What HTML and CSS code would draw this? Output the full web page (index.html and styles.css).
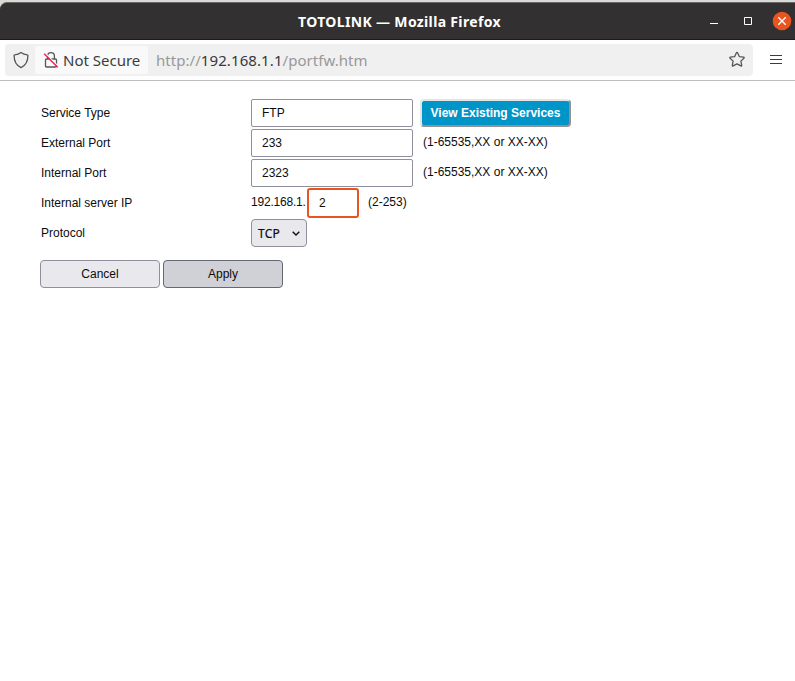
FILE: index.html
```html
<!DOCTYPE html>
<html lang="en">
<head>
<meta charset="utf-8">
<title>TOTOLINK</title>
<link rel="stylesheet" href="styles.css">
</head>
<body>
<div class="window">
  <header class="titlebar">
    <h1 class="title">TOTOLINK — Mozilla Firefox</h1>
    <svg class="controls" width="95" height="37" viewBox="0 0 95 37">
      <path d="M10 20.5h8" stroke="#fff" fill="none"/>
      <path d="M44.5 14.5h7v7h-7z" stroke="#fff" fill="none"/>
      <circle cx="82" cy="18" r="9.3" fill="#e95420"/>
      <path d="M78.300 14.300l7.400 7.400M85.700 14.300l-7.400 7.400" stroke="#fff" stroke-width="1.400"/>
    </svg>
  </header>
  <nav class="toolbar">
    <div class="urlbar">
      <svg class="shield" width="16" height="18" viewBox="0 0 16 18"><path d="M8 1.600C10 3.100 12 3.700 14.300 3.900c.4 0 .6.300.6.700 0 6-1.800 9.900-6.900 12C2.900 14.500 1.100 10.600 1.100 4.600c0-.4.2-.7.6-.7C4 3.700 6 3.100 8 1.600z"/></svg>
      <div class="identity">
        <svg class="lock" width="16" height="18" viewBox="0 0 16 18">
          <path d="M4.600 8V5a3.400 3.400 0 0 1 6.800 0v3M3.600 8h8.800q1.100 0 1.100 1.100v5.800q0 1.100-1.100 1.100H3.600q-1.100 0-1.100-1.100V9.100Q2.500 8 3.600 8z" fill="none" stroke="#55555a" stroke-width="1.300"/>
          <path d="M2.300 2.300l13 13" stroke="#f8f8f8" stroke-width="1.300"/>
          <path d="M1.200 2.800l13.500 13.500" stroke="#f0204e" stroke-width="1.400"/>
        </svg>
        <span class="secure">Not Secure</span>
      </div>
      <div class="url"><span class="scheme">http://</span><span class="host">192.168.1.1</span><span class="path">/portfw.htm</span></div>
      <svg class="star" width="18" height="18" viewBox="0 0 18 18"><path d="M9 1.500q.45 0 .7.5l1.700 3.700 4.200.5q1 .2.300 1l-3 2.900.8 4.200q.1 1-.8.6L9 12.900l-3.900 2q-.9.400-.8-.6l.8-4.200-3-2.900q-.7-.8.300-1l4.200-.5L8.300 2q.25-.5.7-.5z"/></svg>
    </div>
    <svg class="menu" width="12" height="12" viewBox="0 0 12 12"><path d="M0 1.500h12M0 5.500h12M0 9.500h12"/></svg>
  </nav>
  <main class="page">
    <form class="form">
      <div class="row"><label class="label">Service Type</label><input class="field" value="FTP"><button type="button" class="services">View Existing Services</button></div>
      <div class="row"><label class="label">External Port</label><input class="field" value="233"><span class="hint">(1-65535,XX or XX-XX)</span></div>
      <div class="row"><label class="label">Internal Port</label><input class="field" value="2323"><span class="hint">(1-65535,XX or XX-XX)</span></div>
      <div class="row"><label class="label">Internal server IP</label><span class="prefix">192.168.1.</span><input class="field field-ip" value="2"><span class="hint hint-ip">(2-253)</span></div>
      <div class="row"><label class="label">Protocol</label>
        <div class="select"><span class="select-text">TCP</span><svg width="8" height="5" viewBox="0 0 8 5"><path d="M.7.700L4 4 7.300.700"/></svg></div>
      </div>
      <div class="actions"><button type="button" class="btn">Cancel</button><button type="button" class="btn btn-apply">Apply</button></div>
    </form>
  </main>
</div>
</body>
</html>
```
FILE: styles.css
```css
* { box-sizing: border-box; }
body { margin: 0; background: #d9d9d6; font: 12px/16px "Liberation Sans", Arial, sans-serif; color: #0c0c0d; }
.window { height: 681px; padding-top: 2px; overflow: hidden; }
.titlebar { height: 38px; display: grid; grid-template-columns: 99px 1fr 95px; align-items: center; background: #323030; border-top: 1px solid #686868; border-bottom: 1px solid #1c1b1b; border-radius: 7px 0 0 0; }
.title { grid-column: 2; margin: 0; text-align: center; font: bold 14px/20px "Noto Sans", sans-serif; letter-spacing: 0.34px; color: #fff; white-space: nowrap; }
.controls { display: block; }
.toolbar { height: 41px; display: flex; align-items: center; padding: 0 13px 0 5px; background: #fff; border-bottom: 1px solid #bdbdbd; }
.urlbar { width: 748px; height: 32px; display: flex; align-items: center; background: #f0f0f0; border-radius: 4px; }
.shield { margin-left: 8px; flex: none; }
.shield path, .star path { fill: none; stroke: #55555a; stroke-width: 1.3; stroke-linejoin: round; }
.identity { width: 113px; height: 28px; margin-left: 6px; padding-left: 8px; display: flex; align-items: center; background: #f9f9f9; border-radius: 3px; }
.lock { flex: none; }
.secure, .url { font: 15px/20px "Noto Sans", sans-serif; white-space: nowrap; }
.secure { margin-left: 4px; color: #3c3c40; }
.url { margin-left: 8px; color: #98989b; letter-spacing: 0.04px; }
.host { color: #38383d; letter-spacing: 0.1px; }
.star { margin-left: auto; margin-right: 7px; flex: none; }
.menu { margin-left: 17px; flex: none; }
.menu path { stroke: #3c3c40; stroke-width: 1.2; }
.page { height: 600px; padding: 17px 40px; background: #fff; }
.form { margin: 0; }
.row { height: 30px; display: flex; align-items: center; }
.label { width: 211px; padding-left: 1px; }
.field { width: 162px; height: 28px; margin: 0; padding: 0 10px; border: 1px solid #8f8f9d; border-radius: 2px; background: #fff; color: #0c0c0d; font: inherit; outline: none; }
.hint { margin-left: 10px; margin-top: -2px; }
.services { width: 151px; height: 28px; margin-left: 7px; padding: 0 0 1px; border: 2px solid; border-color: #e5e5e5 #929296 #929296 #e5e5e5; border-radius: 4px; background: #0095c8; color: #fff; font: bold 12px/16px "Liberation Sans", Arial, sans-serif; }
.prefix { width: 56px; margin-top: -2px; letter-spacing: -0.2px; white-space: nowrap; }
.field-ip { width: 52px; height: 30px; border: 2px solid #e95420; border-radius: 3px; }
.hint-ip { margin-left: 9px; }
.select { width: 56px; height: 28px; padding: 0 6px; display: flex; align-items: center; justify-content: space-between; border: 1px solid #8f8f9d; border-radius: 4px; background: #e9e9ed; }
.select-text { padding-top: 1px; font: 12px/16px "Noto Sans", sans-serif; letter-spacing: 0.2px; -webkit-text-stroke: 0.2px #0c0c0d; }
.select path { fill: none; stroke: #0c0c0d; stroke-width: 1.4; }
.actions { display: flex; gap: 3px; margin-top: 12px; }
.btn { width: 120px; height: 28px; padding: 0; border: 1px solid #8f8f9d; border-radius: 4px; background: #e9e9ed; color: #0c0c0d; font: inherit; }
.btn-apply { background: #d0d0d7; border-color: #676774; }
```
